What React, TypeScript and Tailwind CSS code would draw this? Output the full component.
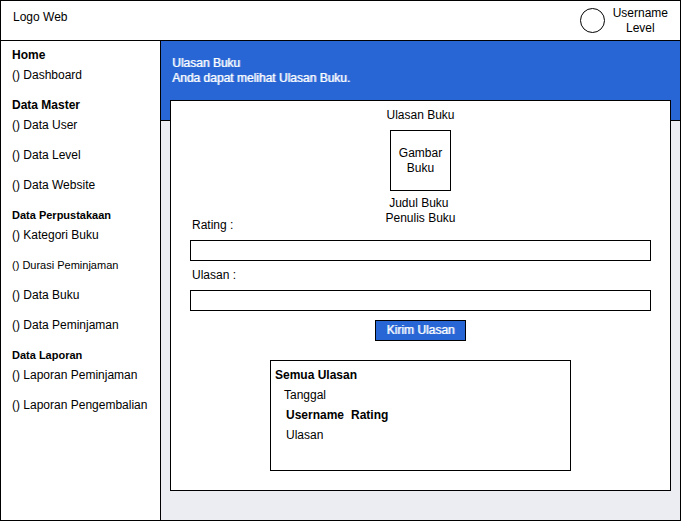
type NavItem = { label: string; small?: boolean };
type NavGroup = { title: string; small?: boolean; items: NavItem[] };

const groups: NavGroup[] = [
  { title: "Home", items: [{ label: "Dashboard" }] },
  {
    title: "Data Master",
    items: [{ label: "Data User" }, { label: "Data Level" }, { label: "Data Website" }],
  },
  {
    title: "Data Perpustakaan",
    small: true,
    items: [
      { label: "Kategori Buku" },
      { label: "Durasi Peminjaman", small: true },
      { label: "Data Buku" },
      { label: "Data Peminjaman" },
    ],
  },
  {
    title: "Data Laporan",
    small: true,
    items: [{ label: "Laporan Peminjaman" }, { label: "Laporan Pengembalian" }],
  },
];

function Header() {
  return (
    <header className="flex h-10 items-start justify-between border-b border-black bg-white pr-3 pl-3">
      <span className="pt-[9px]">Logo Web</span>
      <div className="flex items-start gap-2 pt-[5px]">
        <svg className="mt-0.5 size-[26px]" viewBox="0 0 26 26" aria-hidden="true">
          <circle cx="13.5" cy="12.5" r="12" fill="#fff" stroke="#000" />
        </svg>
        <div className="text-center">
          <div>Username</div>
          <div>Level</div>
        </div>
      </div>
    </header>
  );
}

function Sidebar() {
  return (
    <nav className="flex w-40 shrink-0 flex-col gap-2.5 border-r border-black bg-white pt-1 pl-[11px] leading-5">
      {groups.map((group) => (
        <section key={group.title}>
          <h2 className={group.small ? "text-[11px] leading-5 font-bold" : "font-bold"}>{group.title}</h2>
          <ul className="flex flex-col gap-2.5">
            {group.items.map((item) => (
              <li key={item.label} className={item.small ? "text-[11px] leading-5" : ""}>
                <a href="#" className="block whitespace-nowrap">
                  () {item.label}
                </a>
              </li>
            ))}
          </ul>
        </section>
      ))}
    </nav>
  );
}

function ReviewForm() {
  return (
    <form className="-mt-2 flex flex-col" onSubmit={(e) => e.preventDefault()}>
      <label htmlFor="rating" className="mb-[7px] self-start pl-0.5">
        Rating :
      </label>
      <input id="rating" type="text" className="h-[21px] border border-black bg-white px-1" />
      <label htmlFor="ulasan" className="mt-[7px] mb-[7px] self-start pl-0.5">
        Ulasan :
      </label>
      <input id="ulasan" type="text" className="h-[21px] border border-black bg-white px-1" />
      <button
        type="submit"
        className="mt-[9px] h-[21px] w-[91px] self-center border border-black bg-[#2866d5] text-white [text-shadow:1px_0_0_#ffffff99]"
      >
        Kirim Ulasan
      </button>
    </form>
  );
}

function Reviews() {
  return (
    <section className="mx-auto mt-[19px] h-[111px] w-[301px] border border-black bg-white pt-1 pl-1 leading-5">
      <h2 className="font-bold">Semua Ulasan</h2>
      <p className="pl-[9px]">Tanggal</p>
      <p className="flex gap-[7px] pl-[11px] font-bold">
        <span>Username</span>
        <span>Rating</span>
      </p>
      <p className="pl-[11px]">Ulasan</p>
    </section>
  );
}

export default function App() {
  return (
    <div className="flex min-h-screen flex-col bg-white pr-px pb-px font-['Liberation_Sans',Arial,sans-serif] text-[12px] leading-[15px] text-black">
      <div className="flex grow flex-col border border-black">
        <Header />
        <div className="flex grow">
          <Sidebar />
          <main className="flex min-w-0 grow flex-col bg-[#ebedf3]">
            <div className="h-20 border-b border-black bg-[#2866d5] pt-[15px] pl-[11px] text-white [text-shadow:1px_0_0_#ffffff99]">
              <h1>Ulasan Buku</h1>
              <p>Anda dapat melihat Ulasan Buku.</p>
            </div>
            <div className="z-10 mx-[9px] -mt-[21px] mb-[29px] grow border border-black bg-white px-[19px] pt-1 pb-[19px]">
              <h2 className="text-center leading-5">Ulasan Buku</h2>
              <div className="mx-auto mt-[5px] flex size-[61px] items-center justify-center border border-black text-center">
                Gambar
                <br />
                Buku
              </div>
              <div className="mt-[5px] text-center">
                <p>Judul Buku&nbsp;</p>
                <p>Penulis Buku</p>
              </div>
              <ReviewForm />
              <Reviews />
            </div>
          </main>
        </div>
      </div>
    </div>
  );
}
